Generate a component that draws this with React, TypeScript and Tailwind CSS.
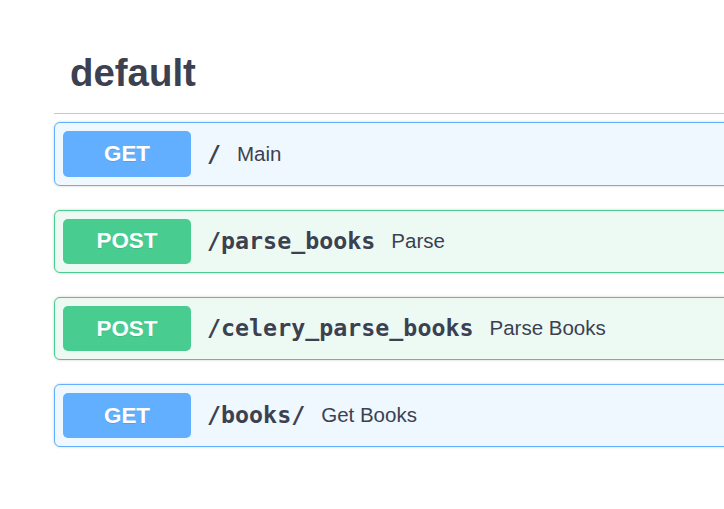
const ops = [
  { method: "GET", path: "/", summary: "Main" },
  { method: "POST", path: "/parse_books", summary: "Parse" },
  { method: "POST", path: "/celery_parse_books", summary: "Parse Books" },
  { method: "GET", path: "/books/", summary: "Get Books" },
];

const Opblock = ({ method, path, summary }: { method: string; path: string; summary: string }) => {
  const isGet = method === "GET";
  return (
    <div
      className={
        isGet
          ? "mb-[23.5px] rounded-[6px] border border-[#61affe] bg-[#eff7ff] shadow-[0_0_3px_rgba(0,0,0,0.19)]"
          : "mb-[23.5px] rounded-[6px] border border-[#49cc90] bg-[#edfaf4] shadow-[0_0_3px_rgba(0,0,0,0.19)]"
      }
    >
      <div className="flex items-center p-2">
        <div
          className={
            isGet
              ? "flex h-[45.6px] w-[128px] items-center justify-center rounded-[5px] bg-[#61affe] text-[22.4px] font-bold text-white [text-shadow:0_1px_0_rgba(0,0,0,0.1)]"
              : "flex h-[45.6px] w-[128px] items-center justify-center rounded-[5px] bg-[#49cc90] text-[22.4px] font-bold text-white [text-shadow:0_1px_0_rgba(0,0,0,0.1)]"
          }
        >
          {method}
        </div>
        <span className="px-4 font-['DejaVu_Sans_Mono',monospace] text-[23.3px] font-bold text-[#3b4151]">
          {path}
        </span>
        <span className="text-[20.5px] text-[#3b4151]">{summary}</span>
      </div>
    </div>
  );
};

const App = () => {
  return (
    <div className="h-[509px] w-screen overflow-hidden bg-white font-['Liberation_Sans',Arial,sans-serif]">
      <div className="w-[1000px] pl-[54px] pt-[38px]">
        <div className="mb-2 border-b border-[rgba(59,65,81,0.3)] pb-[21px] pl-4 pt-4 text-[38.4px] font-bold leading-none text-[#3b4151]">
          default
        </div>
        {ops.map((op) => (
          <Opblock key={op.path} {...op} />
        ))}
      </div>
    </div>
  );
};

export default App;
